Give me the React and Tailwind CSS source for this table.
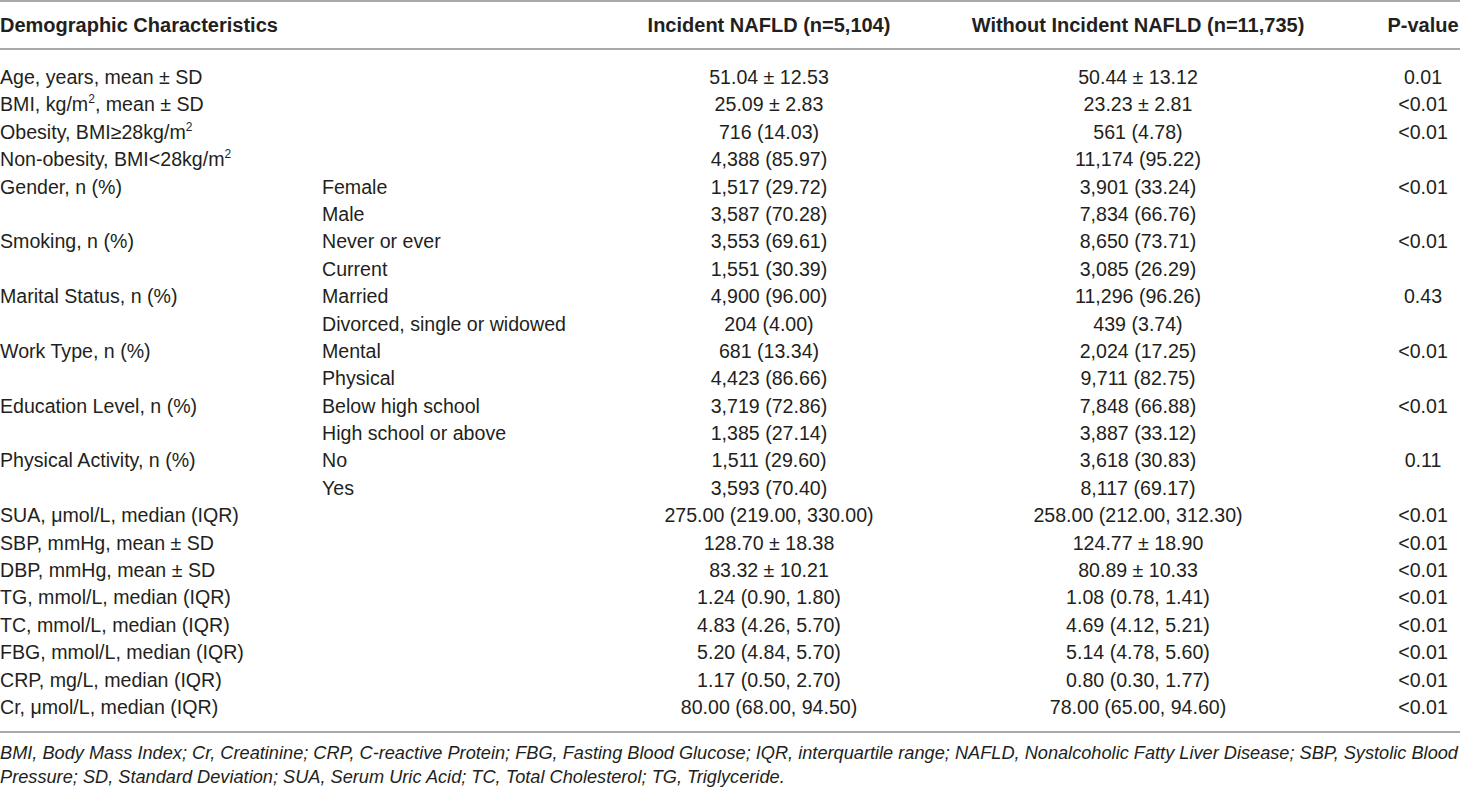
import React from 'react';

const sup2 = <sup className="text-[12px] leading-none relative -top-[8px]">2</sup>;

const rows = [
    ['Age, years, mean ± SD', '', '51.04 ± 12.53', '50.44 ± 13.12', '0.01'],
    [<>BMI, kg/m{sup2}, mean ± SD</>, '', '25.09 ± 2.83', '23.23 ± 2.81', '<0.01'],
    [<>Obesity, BMI≥28kg/m{sup2}</>, '', '716 (14.03)', '561 (4.78)', '<0.01'],
    [<>Non-obesity, BMI&lt;28kg/m{sup2}</>, '', '4,388 (85.97)', '11,174 (95.22)', ''],
    ['Gender, n (%)', 'Female', '1,517 (29.72)', '3,901 (33.24)', '<0.01'],
    ['', 'Male', '3,587 (70.28)', '7,834 (66.76)', ''],
    ['Smoking, n (%)', 'Never or ever', '3,553 (69.61)', '8,650 (73.71)', '<0.01'],
    ['', 'Current', '1,551 (30.39)', '3,085 (26.29)', ''],
    ['Marital Status, n (%)', 'Married', '4,900 (96.00)', '11,296 (96.26)', '0.43'],
    ['', 'Divorced, single or widowed', '204 (4.00)', '439 (3.74)', ''],
    ['Work Type, n (%)', 'Mental', '681 (13.34)', '2,024 (17.25)', '<0.01'],
    ['', 'Physical', '4,423 (86.66)', '9,711 (82.75)', ''],
    ['Education Level, n (%)', 'Below high school', '3,719 (72.86)', '7,848 (66.88)', '<0.01'],
    ['', 'High school or above', '1,385 (27.14)', '3,887 (33.12)', ''],
    ['Physical Activity, n (%)', 'No', '1,511 (29.60)', '3,618 (30.83)', '0.11'],
    ['', 'Yes', '3,593 (70.40)', '8,117 (69.17)', ''],
    ['SUA, μmol/L, median (IQR)', '', '275.00 (219.00, 330.00)', '258.00 (212.00, 312.30)', '<0.01'],
    ['SBP, mmHg, mean ± SD', '', '128.70 ± 18.38', '124.77 ± 18.90', '<0.01'],
    ['DBP, mmHg, mean ± SD', '', '83.32 ± 10.21', '80.89 ± 10.33', '<0.01'],
    ['TG, mmol/L, median (IQR)', '', '1.24 (0.90, 1.80)', '1.08 (0.78, 1.41)', '<0.01'],
    ['TC, mmol/L, median (IQR)', '', '4.83 (4.26, 5.70)', '4.69 (4.12, 5.21)', '<0.01'],
    ['FBG, mmol/L, median (IQR)', '', '5.20 (4.84, 5.70)', '5.14 (4.78, 5.60)', '<0.01'],
    ['CRP, mg/L, median (IQR)', '', '1.17 (0.50, 2.70)', '0.80 (0.30, 1.77)', '<0.01'],
    ['Cr, μmol/L, median (IQR)', '', '80.00 (68.00, 94.50)', '78.00 (65.00, 94.60)', '<0.01'],
];

const grid = 'grid grid-cols-[322px_300px_294px_444px_100px]';

const App = () => {
    return (
        <div className="w-[1460px] bg-white text-[#231f20] text-[19.6px] font-['Liberation_Sans',Arial,sans-serif]">
            {/* Header */}
            <div className={`${grid} h-[50px] items-center border-t-2 border-b-2 border-[#a9a9a9] font-bold text-[20px]`}>
                <div className="col-span-2 whitespace-nowrap">Demographic Characteristics</div>
                <div className="text-center whitespace-nowrap">Incident NAFLD (n=5,104)</div>
                <div className="text-center whitespace-nowrap">Without Incident NAFLD (n=11,735)</div>
                <div className="pl-[26px] text-center whitespace-nowrap">P-value</div>
            </div>

            {/* Body */}
            <div className="pt-[14px] pb-[10px] border-b-2 border-[#a9a9a9]">
                {rows.map((r, i) => (
                    <div key={i} className={`${grid} h-[27.4px] leading-[27.4px]`}>
                        <div className="whitespace-nowrap">{r[0]}</div>
                        <div className="whitespace-nowrap">{r[1]}</div>
                        <div className="text-center whitespace-nowrap">{r[2]}</div>
                        <div className="text-center whitespace-nowrap">{r[3]}</div>
                        <div className="pl-[26px] text-center whitespace-nowrap">{r[4]}</div>
                    </div>
                ))}
            </div>

            {/* Footnote */}
            <p className="pt-[8px] italic text-[18.2px] leading-[24px]">
                BMI, Body Mass Index; Cr, Creatinine; CRP, C-reactive Protein; FBG, Fasting Blood Glucose; IQR, interquartile range; NAFLD, Nonalcoholic Fatty Liver Disease; SBP, Systolic Blood Pressure; SD, Standard Deviation; SUA, Serum Uric Acid; TC, Total Cholesterol; TG, Triglyceride.
            </p>
        </div>
    );
};

export default App;
